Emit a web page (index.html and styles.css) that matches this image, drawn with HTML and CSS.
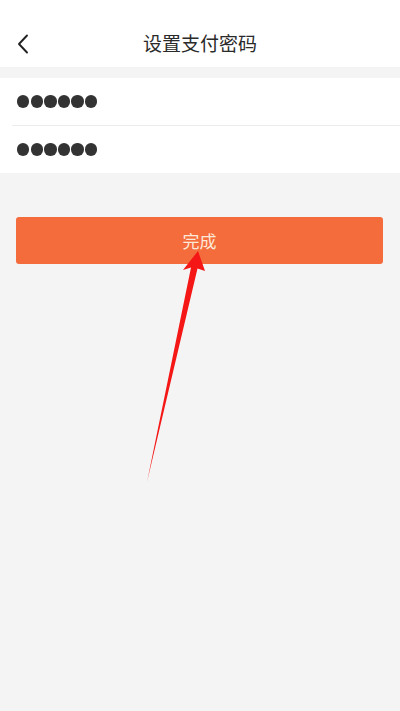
FILE: index.html
```html
<!DOCTYPE html>
<html lang="zh">
<head>
<meta charset="utf-8">
<link rel="stylesheet" href="styles.css">
</head>
<body>
<div class="page">
  <header class="nav">
    <svg class="back" width="12" height="20" viewBox="0 0 12 20"><path d="M10 1.5 L2 10 L10 18.5" fill="none" stroke="#222" stroke-width="1.9" stroke-linecap="round" stroke-linejoin="round"/></svg>
    <div class="title">设置支付密码</div>
  </header>
  <section class="fields">
    <div class="row"><span class="dot"></span><span class="dot"></span><span class="dot"></span><span class="dot"></span><span class="dot"></span><span class="dot"></span></div>
    <div class="row"><span class="dot"></span><span class="dot"></span><span class="dot"></span><span class="dot"></span><span class="dot"></span><span class="dot"></span></div>
  </section>
  <div class="actions">
    <button class="done">完成</button>
  </div>
  <svg class="arrow" width="400" height="711" viewBox="0 0 400 711">
    <polygon points="198,251 205,271 197.5,268.5 147,482 191,267.5 183,270" fill="#f51616"/>
  </svg>
</div>
</body>
</html>
```
FILE: styles.css
```css
html, body {
  margin: 0;
  padding: 0;
  background: #f4f4f4;
  font-family: "Noto Sans CJK SC", "Noto Sans", sans-serif;
}
.page {
  position: relative;
  width: 400px;
  height: 711px;
  overflow: hidden;
  background: #f4f4f4;
}
.nav {
  position: relative;
  height: 67px;
  background: #fff;
  display: flex;
  align-items: center;
  justify-content: center;
  padding-top: 20px;
  box-sizing: border-box;
}
.back {
  position: absolute;
  left: 17px;
  top: 34px;
}
.title {
  font-size: 19px;
  color: #2a2a2a;
  line-height: 26px;
  margin-top: -2px;
}
.fields {
  margin-top: 11px;
  background: #fff;
}
.row {
  height: 47px;
  display: flex;
  align-items: center;
  gap: 1.2px;
  padding-left: 17px;
}
.row + .row {
  border-top: 1px solid #ececec;
  margin-left: 12px;
  padding-left: 5px;
  height: 47px;
}
.dot {
  width: 12.4px;
  height: 12.4px;
  border-radius: 50%;
  background: #333;
}
.actions {
  padding: 44px 17px 0 16px;
}
.done {
  display: block;
  width: 100%;
  height: 47px;
  border: none;
  border-radius: 3px;
  background: #f46b3c;
  color: #fde8d8;
  font-family: "Noto Sans CJK SC", "Noto Sans", sans-serif;
  font-size: 17px;
  padding: 0;
}
.arrow {
  position: absolute;
  left: 0;
  top: 0;
}
```
